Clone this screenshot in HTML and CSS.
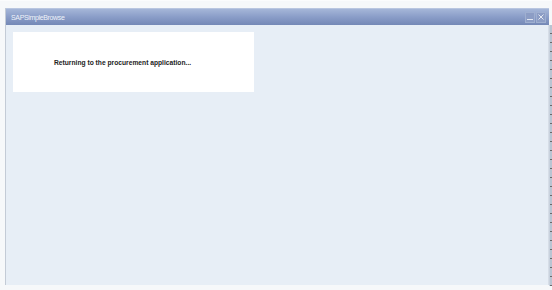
FILE: index.html
```html
<!DOCTYPE html>
<html lang="en">
<head>
  <meta charset="UTF-8" />
  <title>SAPSimpleBrowse</title>
  <link rel="stylesheet" href="styles.css">
</head>
<body>
  <div class="desk">
    <div class="window">
      <div class="title-bar">
        <span class="title">SAPSimpleBrowse</span>
        <div class="controls">
          <span class="ctl">
            <svg width="8" height="8" viewBox="0 0 8 8"><rect x="1" y="6" width="6" height="1" fill="#e3e8f2"/></svg>
          </span>
          <span class="ctl">
            <svg width="8" height="8" viewBox="0 0 8 8"><path d="M1.5 1.5 L6.5 6.5 M6.5 1.5 L1.5 6.5" stroke="#e3e8f2" stroke-width="1"/></svg>
          </span>
        </div>
      </div>
      <div class="content">
        <div class="message-box">
          <span class="message">Returning to the procurement application...</span>
        </div>
      </div>
    </div>
    <div class="back-edge"></div>
  </div>
</body>
</html>
```

FILE: styles.css
```css
:root {
  --pane: #e7eef6;
  --edge: #c3cbd6;
}
html, body {
  margin: 0;
  padding: 0;
  height: 100%;
}
body {
  font-family: "Liberation Sans", Arial, sans-serif;
  background: #f6f8fa;
}
.desk {
  display: flex;
  height: 290px;
  padding-top: 7px;
  box-sizing: border-box;
  border-top: 1px solid #fbfcfd;
}
.window {
  margin-left: 5px;
  width: 544px;
  height: 277px;
  display: flex;
  flex-direction: column;
  border-left: 1px solid var(--edge);
}
.title-bar {
  height: 16px;
  display: flex;
  align-items: center;
  justify-content: space-between;
  background: linear-gradient(#a5b6d8, #8a9dc8 50%, #7488b6);
  padding: 0 3px 0 5px;
  border-top: 1px solid #b9c6e0;
}
.title {
  color: #eef2f9;
  font-size: 7px;
  letter-spacing: -0.35px;
}
.controls {
  display: flex;
  gap: 1px;
}
.ctl {
  width: 10px;
  height: 11px;
  display: flex;
  align-items: center;
  justify-content: center;
  background: #8c9dc5;
  border: 1px solid #9fafd0;
  box-sizing: border-box;
}
.content {
  flex: 1;
  background: var(--pane);
  padding: 7px;
  border-right: 1px solid #d6dde7;
}
.message-box {
  width: 241px;
  height: 60px;
  background: #fff;
  display: flex;
  align-items: center;
  padding-left: 41px;
  box-sizing: border-box;
}
.message {
  font-size: 6.7px;
  font-weight: bold;
  color: #222;
}
.back-edge {
  width: 2px;
  margin-top: 17px;
  height: 261px;
  background: repeating-linear-gradient(#b9c4d2 0 8px, #6a6a6a 8px 9px);
  border-left: 1px solid #c9d2de;
}
```
